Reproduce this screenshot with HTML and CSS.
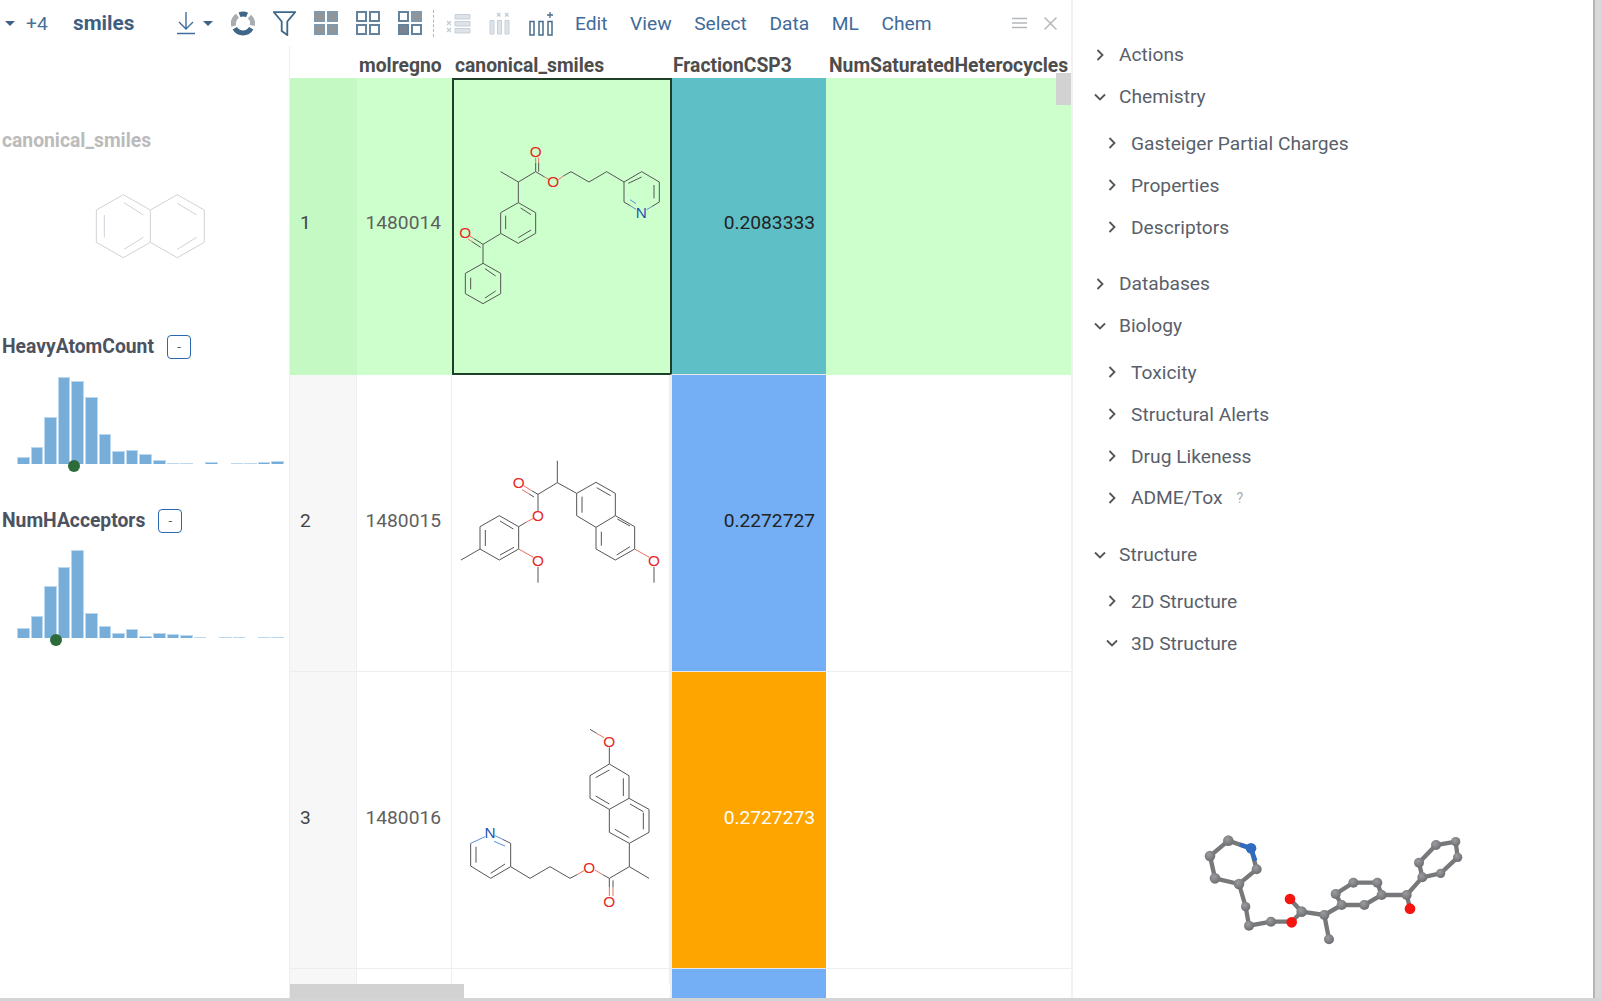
FILE: index.html
```html
<!DOCTYPE html>
<html lang="en">
<head>
    <meta charset="UTF-8">
    <title>smiles</title>
    <link rel="stylesheet" href="styles.css">
</head>
<body>
<div class="app">
    <div class="content">
        <div class="main">
            <div class="toolbar">
                <div class="tb-group tb-first">
                    <span class="caret"></span>
                    <span class="tb-text">+4</span>
                </div>
                <span class="tb-title">smiles</span>
                <div class="tb-group tb-download">
                    <svg class="icon" width="18" height="24" viewBox="0 0 18 24"><path d="M9 1V18M2 11L9 18L16 11M0 22.5H18" fill="none" stroke="#3e6d9e" stroke-width="1.4"/></svg>
                    <span class="caret"></span>
                </div>
                <div class="tb-group tb-icons">
                    <svg class="icon" width="24" height="25" viewBox="0 0 24 25">
                        <path d="M20.2 17.2A9.5 9.5 0 0 1 3.8 17.2" fill="none" stroke="#3f6686" stroke-width="5"/>
                        <path d="M2.8 15A9.5 9.5 0 0 1 6.5 4.8" fill="none" stroke="#a9adb0" stroke-width="5"/>
                        <path d="M8.5 3.7A9.5 9.5 0 0 1 16 3.9" fill="none" stroke="#3f6686" stroke-width="5"/>
                        <path d="M18.5 5.5A9.5 9.5 0 0 1 21.3 14.5" fill="none" stroke="#a9adb0" stroke-width="5"/>
                    </svg>
                    <svg class="icon" width="23" height="25" viewBox="0 0 23 25"><path d="M1 1.2H22L14.3 10.5V24L8.7 20V10.5Z" fill="none" stroke="#3d6688" stroke-width="1.8"/></svg>
                    <div class="quad">
                        <span class="sq sq-full"></span><span class="sq sq-full"></span><span class="sq sq-full"></span><span class="sq sq-full"></span>
                    </div>
                    <div class="quad">
                        <span class="sq"></span><span class="sq"></span><span class="sq"></span><span class="sq"></span>
                    </div>
                    <div class="quad">
                        <span class="sq"></span><span class="sq sq-full"></span><span class="sq sq-dark"></span><span class="sq"></span>
                    </div>
                </div>
                <span class="tb-sep"></span>
                <svg class="icon tb-rows" width="25" height="22" viewBox="0 0 25 22">
                    <path d="M9 2.5H24V7H9ZM9 9.5H24V14H9ZM9 16.5H24V21H9Z" fill="#dde3e8" stroke="#c6d0d9"/>
                    <path d="M1 9L5 13M5 9L1 13M1 16L5 20M5 16L1 20" stroke="#c0cad3" stroke-width="1.2"/>
                </svg>
                <svg class="icon tb-cols" width="21" height="23" viewBox="0 0 21 23">
                    <path d="M1 8.5H5V22H1ZM8.5 8.5H12.5V22H8.5ZM16 8.5H20V22H16Z" fill="#dde3e8" stroke="#c6d0d9"/>
                    <path d="M8 1L11.5 4.5M11.5 1L8 4.5M16 1L19.5 4.5M19.5 1L16 4.5" stroke="#c0cad3" stroke-width="1.2"/>
                </svg>
                <svg class="icon tb-add" width="25" height="25" viewBox="0 0 25 25">
                    <path d="M1 10.5H5V24H1ZM10 10.5H14V24H10ZM19 10.5H23V24H19Z" fill="none" stroke="#4a6c8a" stroke-width="1.5"/>
                    <path d="M21 1V7M18 4H24" stroke="#4a6c8a" stroke-width="1.3"/>
                </svg>
                <div class="menu">
                    <span>Edit</span><span>View</span><span>Select</span><span>Data</span><span>ML</span><span>Chem</span>
                </div>
                <div class="tb-right">
                    <svg class="icon" width="15" height="12" viewBox="0 0 15 12"><path d="M0 1.5H15M0 6H15M0 10.5H15" stroke="#b5b8bb" stroke-width="1.3"/></svg>
                    <svg class="icon" width="13" height="13" viewBox="0 0 13 13"><path d="M0.5 0.5L12.5 12.5M12.5 0.5L0.5 12.5" stroke="#b5b8bb" stroke-width="1.5"/></svg>
                </div>
            </div>

            <div class="body">
                <div class="side">
                    <div class="side-label side-label-dim">canonical_smiles</div>
                    <svg class="naph" width="289" height="100" viewBox="0 150 867 300">
                        <path d="M370 224L451 270V367L370 413L289 367V270ZM451 270L532 224L613 270V367L532 413L451 367" fill="none" stroke="#d2d2d8" stroke-width="3"/>
                        <path d="M372 248L430 285M313 285V352M372 388L430 352M532 250L590 285M590 352L532 388" fill="none" stroke="#d2d2d8" stroke-width="3"/>
                    </svg>

                    <div class="side-head side-head-first">
                        <span class="side-label">HeavyAtomCount</span>
                        <span class="mini-btn">-</span>
                    </div>
                    <div class="hist">
                        <span class="bar" style="height:7px"></span>
                        <span class="bar" style="height:17px"></span>
                        <span class="bar" style="height:47px"></span>
                        <span class="bar" style="height:87px"></span>
                        <span class="bar" style="height:83px"></span>
                        <span class="bar" style="height:67px"></span>
                        <span class="bar" style="height:30px"></span>
                        <span class="bar" style="height:13px"></span>
                        <span class="bar" style="height:14px"></span>
                        <span class="bar" style="height:10px"></span>
                        <span class="bar" style="height:4px"></span>
                        <span class="bar" style="height:1px"></span>
                        <span class="bar" style="height:1px"></span>
                        <span class="bar bar-empty"></span>
                        <span class="bar" style="height:2px"></span>
                        <span class="bar bar-empty"></span>
                        <span class="bar" style="height:1px"></span>
                        <span class="bar" style="height:1px"></span>
                        <span class="bar" style="height:2px"></span>
                        <span class="bar" style="height:3px"></span>
                        <span class="dot" style="left:51px"></span>
                    </div>

                    <div class="side-head">
                        <span class="side-label">NumHAcceptors</span>
                        <span class="mini-btn">-</span>
                    </div>
                    <div class="hist">
                        <span class="bar" style="height:10px"></span>
                        <span class="bar" style="height:22px"></span>
                        <span class="bar" style="height:52px"></span>
                        <span class="bar" style="height:71px"></span>
                        <span class="bar" style="height:88px"></span>
                        <span class="bar" style="height:25px"></span>
                        <span class="bar" style="height:12px"></span>
                        <span class="bar" style="height:5px"></span>
                        <span class="bar" style="height:9px"></span>
                        <span class="bar" style="height:2px"></span>
                        <span class="bar" style="height:5px"></span>
                        <span class="bar" style="height:4px"></span>
                        <span class="bar" style="height:3px"></span>
                        <span class="bar" style="height:1px"></span>
                        <span class="bar bar-empty"></span>
                        <span class="bar" style="height:1px"></span>
                        <span class="bar" style="height:1px"></span>
                        <span class="bar bar-empty"></span>
                        <span class="bar" style="height:1px"></span>
                        <span class="bar" style="height:1px"></span>
                        <span class="dot" style="left:33px"></span>
                    </div>
                </div>

                <div class="grid-wrap">
                    <div class="grid">
                        <div class="th"></div>
                        <div class="th">molregno</div>
                        <div class="th">canonical_smiles</div>
                        <div class="th">FractionCSP3</div>
                        <div class="th">NumSaturatedHeterocycles</div>

                        <div class="td td-head row-on">1</div>
                        <div class="td td-num row-on">1480014</div>
                        <div class="td td-mol row-on td-selected">
                            <svg class="mol" width="219" height="297" viewBox="6 -129 657 891">
                                <path class="bond" d="M99 427L152 457V518L99 548L46 518V457ZM62 470V505M105 443L137 465M105 531L137 510"/>
                                <path class="bond" d="M99 427V370L152 338M99 370L72 353M92 379L66 362"/>
                                <path class="bond" d="M205 245L257 275V337L205 367L152 337V275ZM167 284V324M205 350L243 327M212 261L243 281"/>
                                <path class="bond" d="M205 245V183L152 152M205 183L257 152V125M266 152V125M257 152L284 168M340 165L363 152L417 183L470 152L522 183"/>
                                <path class="bond-o" d="M257 125V110M266 125V110M284 168L298 176M325 176L340 165M72 353L58 344M66 362L54 354"/>
                                <path class="bond" d="M522 183L575 152L628 183V243L605 257M522 183V243L542 255M612 192V232M535 187L575 168"/>
                                <path class="bond-n" d="M605 257L590 266M542 255L558 265M540 236L558 248"/>
                                <text class="atom atom-o" x="257" y="108">O</text>
                                <text class="atom atom-o" x="310" y="199">O</text>
                                <text class="atom atom-o" x="46" y="352">O</text>
                                <text class="atom atom-n" x="574" y="290">N</text>
                            </svg>
                        </div>
                        <div class="td td-frac frac-teal">0.2083333</div>
                        <div class="td row-on"></div>

                        <div class="td td-head">2</div>
                        <div class="td td-num">1480015</div>
                        <div class="td td-mol">
                            <svg class="mol" width="219" height="297" viewBox="6 -225 657 891">
                                <path class="bond" d="M148 197L206 230V297L148 330L90 297V230ZM150 213L190 237M106 240V288M150 315L192 292M90 297L33 330"/>
                                <path class="bond" d="M206 230L228 217M264 183V133L245 122M252 141L236 131M264 133L322 98V32M322 98L380 130"/>
                                <path class="bond-o" d="M228 217L250 205M245 122L222 108M236 131L216 119M206 297L250 322M554 297L598 322"/>
                                <path class="bond" d="M264 350V398M612 350V398"/>
                                <path class="bond" d="M380 130L438 97L496 130V197L438 232L380 197ZM396 140V188M440 113L482 137"/>
                                <path class="bond" d="M496 197L554 230V297L496 330L438 297V232M502 207L540 228M500 315L540 290M454 245V287"/>
                                <text class="atom atom-o" x="206" y="114">O</text>
                                <text class="atom atom-o" x="264" y="214">O</text>
                                <text class="atom atom-o" x="264" y="348">O</text>
                                <text class="atom atom-o" x="612" y="348">O</text>
                            </svg>
                        </div>
                        <div class="td td-frac frac-blue">0.2272727</div>
                        <div class="td"></div>

                        <div class="td td-head">3</div>
                        <div class="td td-num">1480016</div>
                        <div class="td td-mol">
                            <svg class="mol" width="219" height="297" viewBox="6 -114 657 891">
                                <path class="bond" d="M420 58L440 70M478 112V162"/>
                                <path class="bond-o" d="M440 70L462 83M478 532V558M489 532V558M458 494L435 480M402 482L381 494"/>
                                <path class="bond" d="M478 162L537 197V265L478 298L420 265V197ZM478 180L437 203M520 205V258M437 258L478 282"/>
                                <path class="bond" d="M537 265L597 298V367L538 400L478 367V298M540 282L580 305M580 308V358M495 358L538 383"/>
                                <path class="bond" d="M538 400V470L597 505M538 470L478 505L458 494M478 505V532M489 511V532M381 494L360 505L300 470L240 505L182 470"/>
                                <path class="bond" d="M182 470V400L158 388M62 400V468L122 505L182 470M78 410V458M122 490L165 462"/>
                                <path class="bond-n" d="M158 388L135 377M105 380L84 390L62 400M132 394L165 408"/>
                                <text class="atom atom-o" x="478" y="111">O</text>
                                <text class="atom atom-o" x="418" y="488">O</text>
                                <text class="atom atom-o" x="478" y="591">O</text>
                                <text class="atom atom-n" x="120" y="384">N</text>
                            </svg>
                        </div>
                        <div class="td td-frac frac-orange">0.2727273</div>
                        <div class="td"></div>

                        <div class="td td-head"></div>
                        <div class="td"></div>
                        <div class="td"></div>
                        <div class="td td-frac frac-blue"></div>
                        <div class="td"></div>
                    </div>
                    <div class="hscroll"><span class="hscroll-thumb"></span></div>
                    <span class="vscroll-thumb"></span>
                </div>
            </div>
        </div>

        <div class="panel">
            <div class="tree">
                <div class="node"><svg class="chev" viewBox="0 0 12 12"><path d="M3.5 1L8.5 6L3.5 11"/></svg>Actions</div>
                <div class="node"><svg class="chev" viewBox="0 0 12 12"><path d="M1 3.5L6 8.5L11 3.5"/></svg>Chemistry</div>
                <div class="children">
                    <div class="node"><svg class="chev" viewBox="0 0 12 12"><path d="M3.5 1L8.5 6L3.5 11"/></svg>Gasteiger Partial Charges</div>
                    <div class="node"><svg class="chev" viewBox="0 0 12 12"><path d="M3.5 1L8.5 6L3.5 11"/></svg>Properties</div>
                    <div class="node"><svg class="chev" viewBox="0 0 12 12"><path d="M3.5 1L8.5 6L3.5 11"/></svg>Descriptors</div>
                </div>
                <div class="node"><svg class="chev" viewBox="0 0 12 12"><path d="M3.5 1L8.5 6L3.5 11"/></svg>Databases</div>
                <div class="node"><svg class="chev" viewBox="0 0 12 12"><path d="M1 3.5L6 8.5L11 3.5"/></svg>Biology</div>
                <div class="children">
                    <div class="node"><svg class="chev" viewBox="0 0 12 12"><path d="M3.5 1L8.5 6L3.5 11"/></svg>Toxicity</div>
                    <div class="node"><svg class="chev" viewBox="0 0 12 12"><path d="M3.5 1L8.5 6L3.5 11"/></svg>Structural Alerts</div>
                    <div class="node"><svg class="chev" viewBox="0 0 12 12"><path d="M3.5 1L8.5 6L3.5 11"/></svg>Drug Likeness</div>
                    <div class="node"><svg class="chev" viewBox="0 0 12 12"><path d="M3.5 1L8.5 6L3.5 11"/></svg>ADME/Tox<span class="hint">?</span></div>
                </div>
                <div class="node"><svg class="chev" viewBox="0 0 12 12"><path d="M1 3.5L6 8.5L11 3.5"/></svg>Structure</div>
                <div class="children">
                    <div class="node"><svg class="chev" viewBox="0 0 12 12"><path d="M3.5 1L8.5 6L3.5 11"/></svg>2D Structure</div>
                    <div class="node"><svg class="chev" viewBox="0 0 12 12"><path d="M1 3.5L6 8.5L11 3.5"/></svg>3D Structure</div>
                </div>
            </div>

            <svg class="viewer" width="290" height="130" viewBox="0 0 870 390">
                <defs>
                    <radialGradient id="ballC" cx="40%" cy="35%" r="70%"><stop offset="0" stop-color="#9b9c9f"/><stop offset="1" stop-color="#6a6b6e"/></radialGradient>
                </defs>
                <path class="stick" d="M183 85L115 62L60 108L75 175L147 192L200 148L183 85"/>
                <path class="stick" d="M147 192L167 260L177 317L243 305L305 305L335 275L300 237M335 275L403 285L417 358M403 285L455 255"/>
                <path class="stick" d="M455 255L437 222L490 188L562 188L575 225L523 255L455 255M575 225L650 225L660 265M650 225L697 172"/>
                <path class="stick" d="M697 172L687 128L738 75L797 65L803 112L752 160L697 172"/>
                <path class="stick-n" d="M150 74L183 85L196 122"/>
                <g fill="url(#ballC)">
                    <circle cx="115" cy="62" r="16"/><circle cx="60" cy="108" r="16"/><circle cx="75" cy="175" r="16"/><circle cx="147" cy="192" r="16"/><circle cx="200" cy="148" r="15"/>
                    <circle cx="167" cy="260" r="14"/><circle cx="177" cy="317" r="15"/><circle cx="243" cy="305" r="15"/><circle cx="335" cy="275" r="16"/><circle cx="403" cy="285" r="15"/><circle cx="417" cy="358" r="15"/>
                    <circle cx="455" cy="255" r="15"/><circle cx="437" cy="222" r="15"/><circle cx="490" cy="188" r="15"/><circle cx="562" cy="188" r="15"/><circle cx="575" cy="225" r="15"/><circle cx="523" cy="255" r="15"/>
                    <circle cx="650" cy="225" r="15"/><circle cx="697" cy="172" r="15"/><circle cx="687" cy="128" r="15"/><circle cx="738" cy="75" r="15"/><circle cx="797" cy="65" r="14"/><circle cx="803" cy="112" r="14"/><circle cx="752" cy="160" r="14"/>
                </g>
                <circle cx="183" cy="85" r="16" fill="#2f6cc0"/>
                <g fill="#f5140f">
                    <circle cx="305" cy="307" r="16"/><circle cx="300" cy="237" r="16"/><circle cx="660" cy="266" r="16"/>
                </g>
            </svg>
        </div>
        <div class="page-scroll"></div>
    </div>
</div>
</body>
</html>
```

FILE: styles.css
```css
* {
    box-sizing: border-box;
}
html, body {
    margin: 0;
    height: 100%;
    overflow: hidden;
    background: white;
}
body {
    font-family: Roboto, "Liberation Sans", sans-serif;
    font-size: 19.2px;
    color: #5f5f5f;
}
.app {
    height: 1001px;
    border-bottom: 3px solid #d4d4d4;
}
.content {
    display: flex;
    height: 100%;
}
.main {
    width: 1071px;
    flex: none;
    display: flex;
    flex-direction: column;
}

/* toolbar */
.toolbar {
    height: 46px;
    flex: none;
    display: flex;
    align-items: center;
    color: #3f6b9a;
}
.icon {
    flex: none;
    display: block;
}
.tb-group {
    display: flex;
    align-items: center;
}
.tb-first {
    margin-left: 5px;
    gap: 11px;
}
.tb-text {
    color: #4a7099;
    width: 21px;
}
.caret {
    width: 0;
    height: 0;
    border-left: 5px solid transparent;
    border-right: 5px solid transparent;
    border-top: 5px solid #3d6285;
}
.tb-title {
    margin-left: 26px;
    width: 61px;
    font-size: 20.7px;
    font-weight: 700;
    color: #3d6080;
}
.tb-download {
    margin-left: 43px;
    gap: 8px;
}
.tb-icons {
    margin-left: 18px;
    gap: 18px;
}
.quad {
    width: 24px;
    height: 25px;
    display: grid;
    grid-template-columns: 11px 11px;
    grid-template-rows: 11px 11px;
    gap: 2px;
    align-content: center;
}
.sq {
    border: 2px solid #64829b;
    background: white;
}
.sq-full {
    background: #939496;
    border-color: #7f99ae;
}
.sq-dark {
    background: #7a8490;
}
.tb-sep {
    height: 27px;
    margin-left: 11px;
    border-left: 1px dashed #b5b5b5;
}
.tb-rows {
    margin-left: 12px;
}
.tb-cols {
    margin-left: 18px;
}
.tb-add {
    margin-left: 19px;
}
.menu {
    margin-left: 21px;
    display: flex;
    gap: 22.6px;
}
.tb-right {
    margin-left: auto;
    margin-right: 14px;
    display: flex;
    align-items: center;
    gap: 17px;
}

/* left column */
.body {
    flex: 1;
    display: flex;
    min-height: 0;
}
.side {
    width: 289px;
    flex: none;
    padding-top: 83px;
    padding-left: 2px;
}
.side-label {
    font-size: 19.3px;
    font-weight: 700;
    line-height: 24px;
    color: #4d5261;
}
.side-label-dim {
    color: #bbb;
}
.naph {
    display: block;
    margin: 17px 0 0 -2px;
}
.side-head {
    display: flex;
    align-items: center;
    gap: 13px;
    margin-top: 45px;
}
.side-head-first {
    margin-top: 65px;
}
.mini-btn {
    width: 24px;
    height: 24px;
    border: 1px solid #2a68b0;
    border-radius: 4px;
    font-size: 13px;
    line-height: 22px;
    text-align: center;
    color: #555;
}
.hist {
    position: relative;
    width: 267px;
    height: 90px;
    margin: 15px 0 0 15px;
    display: flex;
    align-items: flex-end;
    gap: 1px;
}
.bar {
    flex: 1;
    background: #76aed9;
    border: 1px solid #bcd8ee;
    border-bottom: none;
}
.bar-empty {
    height: 0;
    border: none;
}
.dot {
    position: absolute;
    bottom: -8px;
    width: 12px;
    height: 12px;
    border-radius: 50%;
    background: #2e6b3b;
}

/* grid */
.grid-wrap {
    position: relative;
    flex: 1;
    overflow: hidden;
    border-left: 1px solid #eee;
}
.grid {
    display: grid;
    grid-template-columns: 67px 95px 218px 156px 246px;
    grid-template-rows: 32px 297px 297px 297px 60px;
}
.th {
    padding-left: 2px;
    font-size: 19.3px;
    font-weight: 700;
    line-height: 40px;
    color: #4d4d4d;
    white-space: nowrap;
    overflow: hidden;
}
.th:nth-child(n+3) {
    padding-left: 3px;
}
.td {
    display: flex;
    align-items: center;
    padding-bottom: 6px;
    border-right: 1px solid #eee;
    border-bottom: 1px solid #eee;
}
.td-head {
    padding-left: 10px;
    background: #f7f7f7;
    color: #444;
}
.td-num {
    justify-content: flex-end;
    padding-right: 10px;
}
.td-mol {
    padding: 0;
}
.mol {
    display: block;
    flex: none;
}
.td-frac {
    justify-content: flex-end;
    padding-right: 11px;
    color: #222;
    border-right: none;
    border-left: 2px solid #eee;
    border-bottom: 1px solid #e8e8e8;
}
.row-on {
    background: #ccffcc;
    border-color: #ccffcc;
    padding-bottom: 7px;
}
.td-head.row-on {
    background: #c4f9c4;
    border-color: #c4f9c4;
}
.td-selected {
    border: 2px solid #1f3f28;
    border-right: none;
    padding: 0;
}
.td-selected .mol {
    margin: -2px;
}
.frac-teal {
    background: #5ebfc7;
    border-left-color: #1f3f28;
    padding-bottom: 7px;
}
.frac-blue {
    background: #74aef5;
}
.frac-orange {
    background: #ffa500;
    color: white;
}
.hscroll {
    position: absolute;
    left: 0;
    bottom: 0;
    width: 380px;
    height: 14px;
    background: white;
}
.hscroll-thumb {
    display: block;
    width: 174px;
    height: 100%;
    background: #d2d2d2;
}
.vscroll-thumb {
    position: absolute;
    right: 0;
    top: 27px;
    width: 15px;
    height: 32px;
    background: #d2d2d2;
}

/* molecules */
.bond {
    fill: none;
    stroke: #555;
    stroke-width: 3;
}
.bond-o {
    fill: none;
    stroke: #e8705f;
    stroke-width: 3;
}
.bond-n {
    fill: none;
    stroke: #5a8fd8;
    stroke-width: 3;
}
.atom {
    font-family: "Liberation Sans", sans-serif;
    font-size: 46px;
    text-anchor: middle;
}
.atom-o {
    fill: #e6281e;
}
.atom-n {
    fill: #1f56b0;
}

/* right panel */
.panel {
    flex: 1;
    display: flex;
    flex-direction: column;
    border-left: 2px solid #f1f1f6;
}
.tree {
    padding: 34px 0 0 21px;
    color: #5a5f6b;
}
.node {
    display: flex;
    align-items: center;
    height: 41.8px;
}
.chev {
    width: 12px;
    height: 12px;
    margin-right: 13px;
    fill: none;
    stroke: #555;
    stroke-width: 1.8;
}
.children {
    padding: 5px 0 15px 12px;
}
.hint {
    margin-left: 14px;
    font-size: 14px;
    color: #aaa;
}
.viewer {
    display: block;
    margin: auto 0 48px 117px;
}
.stick {
    fill: none;
    stroke: #77787a;
    stroke-width: 13;
}
.stick-n {
    fill: none;
    stroke: #2f6cc0;
    stroke-width: 13;
}
.page-scroll {
    width: 8px;
    flex: none;
    background: #d9d9dc;
    border-left: 2px solid #b4b4b4;
}
```
